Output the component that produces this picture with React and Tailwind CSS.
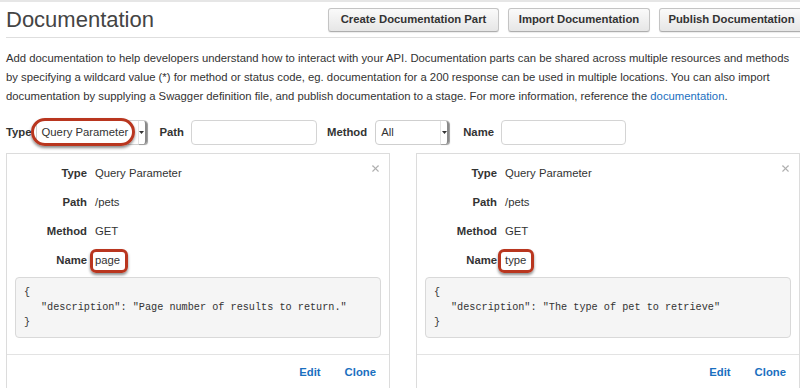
import { X } from 'lucide-react';

const blue = 'text-[#1a6fc0]';

function Button({ children, w }) {
  return (
    <button className={`${w} h-[24px] shrink-0 rounded-[3px] border border-[#c4c4c4] border-b-[#aeaeae] bg-linear-to-b from-[#fafafa] to-[#e6e6e6] text-[11.3px] font-bold text-[#333] shadow-[0_1px_1px_rgba(0,0,0,0.08)]`}>
      {children}
    </button>
  );
}

function Select({ value, w }) {
  return (
    <div className={`${w} h-[25px] flex items-stretch rounded-[4px] border border-[#cfcfcf] bg-white text-[11.3px]`}>
      <span className="flex-1 flex items-center pl-[5px] whitespace-nowrap">{value}</span>
      <span className="w-[9px] flex items-center justify-center rounded-r-[3px] border-l border-[#e3e3e3] border-r-2 border-r-[#8a8a8a] shadow-[1px_1px_1px_rgba(0,0,0,0.25)]">
        <svg width="5" height="3" viewBox="0 0 5 3"><path d="M0 0h5L2.5 3z" fill="#333" /></svg>
      </span>
    </div>
  );
}

function Field({ w }) {
  return <div className={`${w} h-[25px] rounded-[4px] border border-[#d4d4d4] bg-white`} />;
}

function Row({ label, children }) {
  return (
    <div className="h-[29px] flex items-center">
      <span className="w-[80px] text-right font-bold">{label}</span>
      <span className="ml-[8px] flex items-center">{children}</span>
    </div>
  );
}

function Marked({ children, className }) {
  return (
    <span className={`h-[24px] flex items-center rounded-[6px] border-[3px] border-[#b9361f] shadow-[0_2px_3px_rgba(0,0,0,0.45)] ${className}`}>
      {children}
    </span>
  );
}

function Card({ name, desc, mark }) {
  return (
    <div className="relative h-[260px] border border-[#dcdcdc] bg-white text-[11.3px] text-[#333]">
      <X className="absolute right-[8px] top-[9px] text-[#b0b0b0]" size={11} strokeWidth={2.4} />
      <div className="pt-[5px]">
        <Row label="Type">Query Parameter</Row>
        <Row label="Path">/pets</Row>
        <Row label="Method">GET</Row>
        <Row label="Name">{mark(name)}</Row>
      </div>
      <div className="mt-[2px] mx-[8px] py-[7px] pl-[8px] rounded-[4px] border border-[#d9d9d9] bg-[#f5f5f5] font-['Liberation_Mono',monospace] text-[10.2px] leading-[15px] text-[#333]">
        <div>{'{'}</div>
        <div className="pl-[17px] whitespace-pre">"description": "{desc}"</div>
        <div>{'}'}</div>
      </div>
      <div className="mt-[16px] h-[36px] flex items-center justify-end gap-[24px] pr-[13px] border-t border-[#e3e3e3] font-bold">
        <span className={blue}>Edit</span>
        <span className={blue}>Clone</span>
      </div>
    </div>
  );
}

export default function App() {
  return (
    <div className="w-[800px] h-[388px] overflow-hidden bg-white border-t-2 border-[#e6e6e6] font-['Liberation_Sans',Arial,sans-serif] text-[#333]">
      <div className="pl-[6px]">
        <div className="h-[36px] flex items-center border-b border-[#dedede]">
          <h1 className="flex-1 text-[22px] text-[#444]">Documentation</h1>
          <div className="flex gap-[9px] mr-[-4px]">
            <Button w="w-[171px]">Create Documentation Part</Button>
            <Button w="w-[142px]">Import Documentation</Button>
            <Button w="w-[145px]">Publish Documentation</Button>
          </div>
        </div>

        <p className="mt-[11px] text-[11.3px] leading-[19px] whitespace-nowrap">
          Add documentation to help developers understand how to interact with your API. Documentation parts can be shared across multiple resources and methods<br />
          by specifying a wildcard value (*) for method or status code, eg. documentation for a 200 response can be used in multiple locations. You can also import<br />
          documentation by supplying a Swagger definition file, and publish documentation to a stage. For more information, reference the <span className={blue}>documentation</span>.
        </p>

        <div className="mt-[14px] flex items-center text-[11.3px]">
          <span className="font-bold">Type</span>
          <div className="relative ml-[4px]">
            <Select value="Query Parameter" w="w-[112px]" />
            <span className="absolute left-[-5px] top-[-2px] w-[104px] h-[28px] rounded-full border-[3px] border-[#b9361f] shadow-[0_2px_3px_rgba(0,0,0,0.45)]" />
          </div>
          <span className="ml-[12px] font-bold">Path</span>
          <div className="ml-[7px]"><Field w="w-[126px]" /></div>
          <span className="ml-[10px] font-bold">Method</span>
          <div className="ml-[8px]"><Select value="All" w="w-[75px]" /></div>
          <span className="ml-[13px] font-bold">Name</span>
          <div className="ml-[7px]"><Field w="w-[125px]" /></div>
        </div>

        <div className="mt-[8px] grid grid-cols-2 gap-[26px]">
          <Card
            name="page"
            desc="Page number of results to return."
            mark={(t) => <Marked className="-ml-[5px] pl-[2px] pr-[5px]">{t}</Marked>}
          />
          <Card
            name="type"
            desc="The type of pet to retrieve"
            mark={(t) => <Marked className="-ml-[7px] pl-[4px] pr-[5px]">{t}</Marked>}
          />
        </div>
      </div>
    </div>
  );
}
